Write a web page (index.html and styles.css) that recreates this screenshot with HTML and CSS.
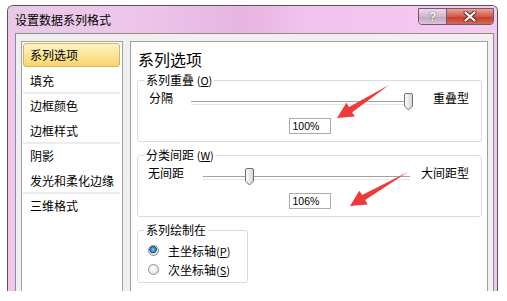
FILE: index.html
```html
<!DOCTYPE html>
<html lang="zh-CN">
<head>
    <meta charset="UTF-8">
    <title>设置数据系列格式</title>
    <link rel="stylesheet" href="styles.css">
</head>
<body>
    <div class="window">
        <div class="titlebar">
            <span class="title">设置数据系列格式</span>
            <div class="caption">
                <span class="btn-help">?</span>
                <span class="btn-close">
                    <svg width="14" height="11" viewBox="0 0 14 11">
                        <path d="M2.5 1.5 L11.5 9.5 M11.5 1.5 L2.5 9.5" stroke="#5a2a26" stroke-width="4" stroke-linecap="round"/>
                        <path d="M2.5 1.5 L11.5 9.5 M11.5 1.5 L2.5 9.5" stroke="#fff" stroke-width="2.2" stroke-linecap="round"/>
                    </svg>
                </span>
            </div>
        </div>
        <div class="client">
            <ul class="nav">
                <li class="active">系列选项</li>
                <li class="sep">填充</li>
                <li>边框颜色</li>
                <li class="sep">边框样式</li>
                <li>阴影</li>
                <li class="sep">发光和柔化边缘</li>
                <li>三维格式</li>
            </ul>
            <div class="pane">
                <h3>系列选项</h3>
                <fieldset class="group">
                    <legend>系列重叠 <span class="key">(<u>O</u>)</span></legend>
                    <div class="group-body">
                        <div class="slider-row first">
                            <span class="lbl">分隔</span>
                            <div class="track">
                                <span class="thumb" style="left: 212px">
                                    <svg width="11" height="18" viewBox="0 0 11 18"><defs><linearGradient id="tg1" x1="0" y1="0" x2="1" y2="0"><stop offset="0" stop-color="#fdfdfd"/><stop offset="1" stop-color="#d4d4d4"/></linearGradient></defs><path d="M1.5 2 Q1.5 0.5 3 0.5 L8 0.5 Q9.5 0.5 9.5 2 L9.5 13 L5.5 17 L1.5 13 Z" fill="url(#tg1)" stroke="#6f6f6f"/></svg>
                                </span>
                            </div>
                            <span class="lbl-end">重叠型</span>
                        </div>
                        <div class="value-row"><span class="pct">100%</span></div>
                    </div>
                </fieldset>
                <fieldset class="group">
                    <legend>分类间距 <span class="key">(<u>W</u>)</span></legend>
                    <div class="group-body">
                        <div class="slider-row second">
                            <span class="lbl">无间距</span>
                            <div class="track">
                                <span class="thumb" style="left: 41px">
                                    <svg width="11" height="18" viewBox="0 0 11 18"><defs><linearGradient id="tg2" x1="0" y1="0" x2="1" y2="0"><stop offset="0" stop-color="#fdfdfd"/><stop offset="1" stop-color="#d4d4d4"/></linearGradient></defs><path d="M1.5 2 Q1.5 0.5 3 0.5 L8 0.5 Q9.5 0.5 9.5 2 L9.5 13 L5.5 17 L1.5 13 Z" fill="url(#tg2)" stroke="#6f6f6f"/></svg>
                                </span>
                            </div>
                            <span class="lbl-end">大间距型</span>
                        </div>
                        <div class="value-row"><span class="pct">106%</span></div>
                    </div>
                </fieldset>
                <fieldset class="group axis">
                    <legend>系列绘制在</legend>
                    <div class="radio-list">
                        <div class="radio-row"><span class="radio checked"></span>主坐标轴 <span class="key">(<u>P</u>)</span></div>
                        <div class="radio-row"><span class="radio"></span>次坐标轴 <span class="key">(<u>S</u>)</span></div>
                    </div>
                </fieldset>
            </div>
        </div>
    </div>

    <svg class="arrows" width="507" height="301" viewBox="0 0 507 301">
        <polygon points="389,85 352.2,112.2 354.8,116.4 337,118 346.4,102.8 349,107" fill="#ee3a3a"/>
        <polygon points="408,172 365.2,200.1 367.8,204.4 350,206 359.4,190.8 362,195.1" fill="#ee3a3a"/>
    </svg>
</body>
</html>
```

FILE: styles.css
```css
*{
    margin: 0;
    padding: 0;
    box-sizing: border-box;
}
body{
    position: relative;
    width: 507px;
    height: 301px;
    overflow: hidden;
    background: #fff;
    font-family: "Noto Sans CJK SC", "Liberation Sans", sans-serif;
    font-size: 12px;
    color: #000;
}
li{
    list-style: none;
}
.window{
    margin: 5px 0 0 7px;
    width: 491px;
    height: 286px;
    border: 1px solid #5e545e;
    border-bottom: none;
    border-radius: 6px 6px 0 0;
    background: #efc9ed;
    overflow: hidden;
}
.titlebar{
    height: 27px;
    display: flex;
    align-items: flex-start;
    justify-content: space-between;
    padding-left: 7px;
    background: linear-gradient(90deg, #e9c9e6 0%, #eec6ec 25%, #e6b5e0 48%, #f1c3ee 62%, #f6cbf2 100%);
}
.title{
    line-height: 27px;
}
.caption{
    display: flex;
    margin: 2px 3px 0 0;
    height: 17px;
    border: 1px solid #6d5a6a;
    border-radius: 0 0 4px 4px;
    overflow: hidden;
}
.btn-help{
    width: 28px;
    text-align: center;
    line-height: 15px;
    font-family: "Liberation Sans", sans-serif;
    font-size: 13px;
    font-weight: bold;
    color: #fff;
    text-shadow: 0 0 1px #444, 0 0 1px #444;
    background: linear-gradient(#eed9ec, #d2b6cf 50%, #c3a3c0 51%, #dcc4da);
    border-right: 1px solid #6d5a6a;
}
.btn-close{
    width: 46px;
    display: flex;
    align-items: center;
    justify-content: center;
    background: linear-gradient(#e9a397, #d2584a 50%, #c23a29 51%, #d46a55);
}
.client{
    display: flex;
    align-items: flex-start;
    gap: 7px;
    margin-left: 7px;
    width: 479px;
    height: 260px;
    padding: 7px 5px 0 5px;
    background: #f0f0f0;
    border: 1px solid #8d8d8d;
    border-bottom: none;
}
.nav{
    width: 102px;
    height: 260px;
    padding: 1px 2px 1px 1px;
    background: #fff;
    border: 1px solid #a0a0a0;
}
.nav li{
    height: 25px;
    line-height: 24px;
    padding-left: 7px;
    white-space: nowrap;
}
.nav li.active{
    height: 24px;
    margin-bottom: 2px;
    line-height: 22px;
    padding-left: 6px;
    border: 1px solid #d6b45a;
    border-radius: 3px;
    background: linear-gradient(#fdf3c4, #fbe49a 50%, #f8d66a);
}
.nav li.sep{
    border-bottom: 2px solid #ececec;
}
.pane{
    width: 358px;
    height: 260px;
    padding: 0 5px 0 6px;
    background: #fff;
    border: 1px solid #a0a0a0;
}
.pane h3{
    margin: 7px 0 4px 1px;
    font-size: 16px;
    font-weight: normal;
    line-height: 20px;
}
.group{
    width: 345px;
    margin-bottom: 6px;
    border: 1px solid #d5dde3;
    border-radius: 3px;
}
.group legend{
    margin-left: 6px;
    padding: 0 2px;
    line-height: 14px;
    height: 14px;
}
.key{
    font-size: 11px;
}
.group-body{
    padding: 1px 0 7px;
}
.slider-row{
    display: flex;
    align-items: flex-start;
    height: 20px;
    line-height: 20px;
}
.slider-row.first{
    padding-left: 11px;
}
.slider-row.first .lbl{
    width: 42px;
}
.slider-row.first .track{
    width: 222px;
}
.slider-row.first .lbl-end{
    margin-left: 20px;
}
.slider-row.second{
    padding-left: 10px;
}
.slider-row.second .lbl{
    width: 55px;
}
.slider-row.second .track{
    width: 207px;
}
.slider-row.second .lbl-end{
    margin-left: 11px;
}
.track{
    position: relative;
    height: 20px;
}
.track::before{
    content: "";
    position: absolute;
    left: 0;
    right: 0;
    top: 13px;
    height: 2px;
    border-top: 1px solid #a3a3a3;
    border-bottom: 1px solid #e4e4e4;
}
.thumb{
    position: absolute;
    top: 5px;
    width: 11px;
    height: 18px;
    line-height: 0;
}
.value-row{
    display: flex;
    justify-content: center;
    margin-top: 10px;
}
.pct{
    width: 42px;
    height: 16px;
    padding-left: 3px;
    border: 1px solid #acacac;
    font-family: "Liberation Sans", sans-serif;
    font-size: 10.5px;
    line-height: 14px;
}
.group.axis{
    width: 111px;
    margin-top: 2px;
}
.radio-list{
    padding: 4px 0 3px 10px;
}
.radio-row{
    display: flex;
    align-items: center;
    height: 19px;
    white-space: nowrap;
}
.radio{
    width: 11px;
    height: 11px;
    margin-right: 9px;
    border: 1px solid #8e8f8f;
    border-radius: 50%;
    background: radial-gradient(circle at 40% 35%, #ffffff, #d8d8d8);
}
.radio.checked{
    background: radial-gradient(circle at 45% 40%, #8fd3f5 0, #2a7cb3 2.5px, #184f7a 3.5px, #e8e8e8 4px, #d2d2d2 100%);
}
.arrows{
    position: absolute;
    left: 0;
    top: 0;
    pointer-events: none;
}
```
